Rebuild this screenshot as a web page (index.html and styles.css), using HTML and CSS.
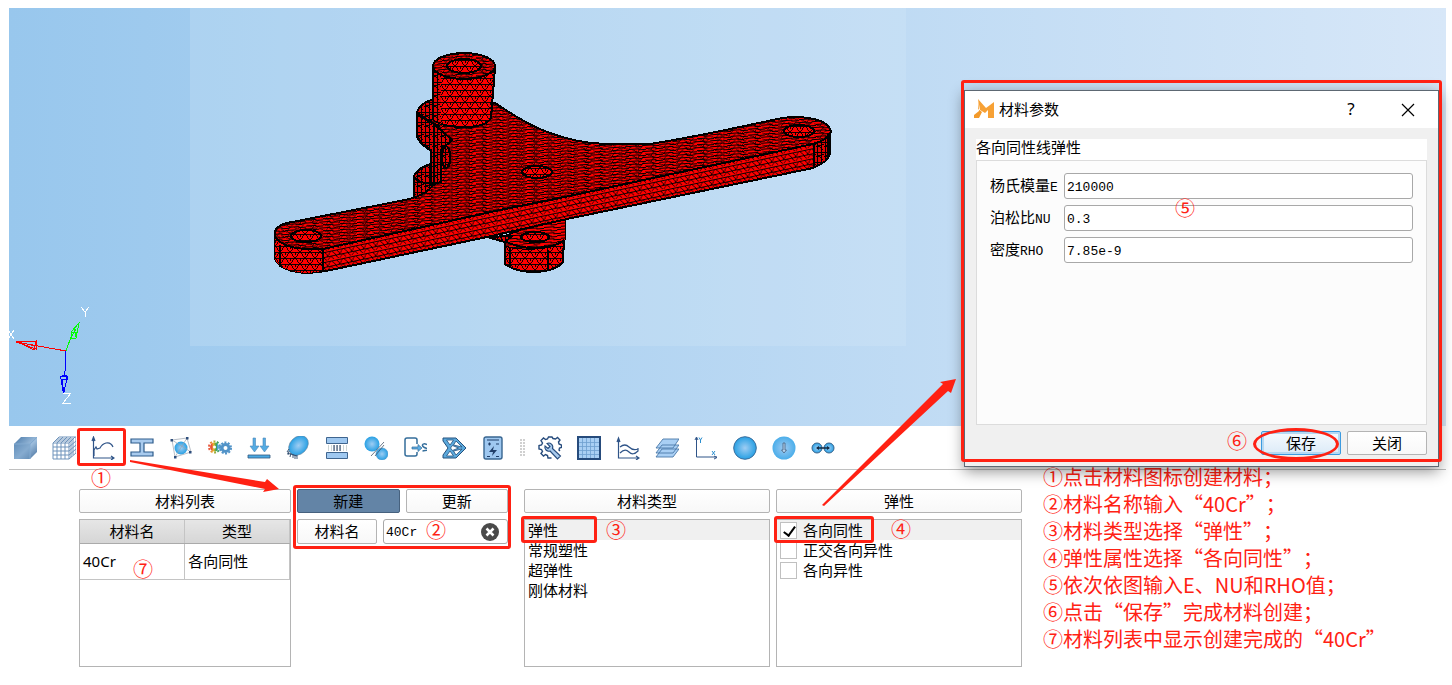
FILE: index.html
```html
<!DOCTYPE html>
<html lang="zh-CN">
<head>
<meta charset="utf-8">
<title>材料参数</title>
<link rel="stylesheet" href="styles.css">
</head>
<body>
<main class="app">
  <section class="viewer">
    <svg class="model" width="716" height="338" viewBox="190 8 716 338" shape-rendering="crispEdges" role="img" aria-label="网格模型">
      <defs>
        <pattern id="mesh-top" width="17" height="6" patternUnits="userSpaceOnUse" patternTransform="skewY(-4)">
          <rect width="17" height="6" fill="#f00"/>
          <path d="M0 1h7l3 1h7M0 4h4l3 1h6l4-1" stroke="#000" fill="none"/>
        </pattern>
        <pattern id="mesh-diag" width="13" height="6" patternUnits="userSpaceOnUse" patternTransform="skewY(-10)">
          <path d="M0 0l5 3M7 0l-3 3M8 3l5 3M4 3l-3 3" stroke="#000" stroke-width=".8" fill="none"/>
        </pattern>
        <pattern id="mesh-side" width="12" height="10" patternUnits="userSpaceOnUse" patternTransform="skewY(-12)">
          <rect width="12" height="10" fill="#f00"/>
          <path d="M0 1h12M0 6h12M0 1l4 5l3-5l5 5M0 6l3 5l4-5l4 5" stroke="#000" stroke-width=".9" fill="none"/>
        </pattern>
        <pattern id="mesh-round" width="10" height="12" patternUnits="userSpaceOnUse">
          <rect width="10" height="12" fill="#f00"/>
          <path d="M0 .5h10M0 6.500h10M0 0l5 6l5-6M0 12l5-6l5 6M5 0v3M0 6v3" stroke="#000" stroke-width=".9" fill="none"/>
        </pattern>
        <pattern id="mesh-dense" width="8" height="10" patternUnits="userSpaceOnUse">
          <rect width="8" height="10" fill="#e00000"/>
          <path d="M1 0v10M5 0v10M0 2h8M0 7l8-3M1 4l6 6" stroke="#000" fill="none"/>
        </pattern>
      </defs>
      <g stroke="#000" stroke-width="2">
        <path d="M505 236V264Q515 272 535 272Q556 271 563 262L565 216Z" fill="url(#mesh-round)"/>
        <path d="M505 236V246Q517 250 535 249Q556 248 565 240V214Z" fill="url(#mesh-top)" stroke-width="1"/>
        <path d="M505 241Q517 248 535 248Q556 247 564 240M510 248V268M548 250V271" fill="none"/>
        <path d="M487 237L505 242L512 236Z" fill="url(#mesh-dense)"/>
        <path d="M434 163Q418 167 414 176V197L440 193V163Z" fill="url(#mesh-dense)"/>
        <path d="M414 177Q421 185 434 183" fill="none"/>
        <path d="M434 99Q420 103 417 112V137Q420 144 430 150H446V99Z" fill="url(#mesh-dense)"/>
        <path d="M275 232V259Q281 272 308 273L326 271L487 237L567 219L813 168Q829 161 830 153V131Z" fill="url(#mesh-side)"/>
        <path d="M275 236V259Q281 272 308 273L323 271V247Z" fill="url(#mesh-round)" stroke="none"/>
        <path d="M814 144L830 134V154Q827 162 814 167Z" fill="url(#mesh-dense)" stroke-width="1"/>
        <path d="M275 237V231Q278 225 287 223L400 201Q425 197 434 184V150L418 133Q417 127 433 119L495 103C510 113 523 122 542 130C570 141 590 144 612 144H650C690 138 745 126 782 118Q797 116 808 118Q829 121 831 132Q828 140 813 144L667 175L560 198L500 210L323 249Q285 251 275 237Z" fill="url(#mesh-top)"/>
        <path d="M275 237V231Q278 225 287 223L400 201Q425 197 434 184V150L418 133Q417 127 433 119L495 103C510 113 523 122 542 130C570 141 590 144 612 144H650C690 138 745 126 782 118Q797 116 808 118Q829 121 831 132Q828 140 813 144L667 175L560 198L500 210L323 249Q285 251 275 237Z" fill="url(#mesh-diag)"/>
        <path d="M417 113V136Q422 146 431 150V185L441 182V150L452 140L434 124Q425 118 417 113Z" fill="url(#mesh-dense)"/>
        <path d="M418 114Q429 123 440 126M434 126V186M323 249V271M280 245V267M814 144V167M828 134V157" fill="none"/>
        <path d="M433 66V119Q441 127 464 127Q486 127 491 118L495 68Z" fill="url(#mesh-round)"/>
        <path d="M433 66V119L441 124V75Z" fill="url(#mesh-dense)" stroke="none"/>
        <ellipse cx="464" cy="66" rx="31" ry="13" fill="url(#mesh-top)"/>
        <ellipse cx="464" cy="66" rx="31" ry="13" fill="url(#mesh-diag)"/>
        <ellipse cx="464" cy="66" rx="17" ry="7" fill="url(#mesh-round)"/>
      </g>
      <g fill="url(#mesh-round)" stroke="#000" stroke-width="2">
        <ellipse cx="306" cy="236" rx="15" ry="6"/>
        <ellipse cx="537" cy="172" rx="15" ry="6"/>
        <ellipse cx="799" cy="131" rx="15" ry="6"/>
        <ellipse cx="535" cy="237" rx="14" ry="5"/>
        <ellipse cx="446" cy="157" rx="4" ry="11" fill="url(#mesh-dense)"/>
      </g>
      <path d="M449 147q5 10 0 21z"/>
    </svg>
    <svg class="axes" width="90" height="110" viewBox="9 300 90 110" fill="none" shape-rendering="crispEdges" aria-hidden="true">
      <path d="M66 350L16 341M16 341l20-1v8zM22 342l14 3M36 340l-2 9l-14-7" stroke="#f00"/>
      <path d="M66 350l5-14M79 322l-8 9v6h5zM71 331l6 0M74 327l2 9M71 336l5-8" stroke="#0f0"/>
      <path d="M65.500 350v14l-1 12M60.500 375h7l-4 18zM60.500 378h7v-3l-4 18M61.500 374h5v7M62.500 378l1 15" stroke="#00f"/>
      <path d="M81 306l4 5l4-5M85 311v5M8 329l6 9M14 329l-6 9M63 392h8l-8 10h8" stroke="#fff"/>
    </svg>
  </section>

  <nav class="toolbar" aria-label="工具栏">
    <svg class="defs" width="0" height="0" aria-hidden="true">
      <defs>
        <linearGradient id="cube" x1="0" y1="0" x2="1" y2="1"><stop offset="0" stop-color="#4878a8"/><stop offset=".55" stop-color="#9dbddc"/><stop offset="1" stop-color="#456f9c"/></linearGradient>
        <radialGradient id="ball"><stop offset="0" stop-color="#9fcdf3"/><stop offset="1" stop-color="#27a0e4"/></radialGradient>
        <radialGradient id="soft"><stop offset="0" stop-color="#9fcaf2"/><stop offset="1" stop-color="#4baeea"/></radialGradient>
        <linearGradient id="gears"><stop offset="0" stop-color="#e8503c"/><stop offset=".35" stop-color="#e8b52c"/><stop offset=".8" stop-color="#35a24c"/><stop offset="1" stop-color="#4c9fd6"/></linearGradient>
      </defs>
    </svg>
    <button class="tool" aria-label="几何"><svg viewBox="0 0 24 24"><path d="M1 8l7-7h16v15l-7 7H1z" fill="url(#cube)"/><path d="M1 8h16v15H1z" fill="#6b96c0" opacity=".45"/><path d="M1 8h16l7-7M17 8v15" stroke="#83aad0" fill="none"/></svg></button>
    <button class="tool" aria-label="网格"><svg viewBox="0 0 24 24" fill="none" stroke="#6e93bb"><path d="M1 7h16v16H1zM5 7v16M9 7v16M13 7v16M1 11h16M1 15h16M1 19h16M1 7l6-6h17v16l-7 6M5 7l6-6M9 7l6-6M13 7l6-6M17 7l6-6M3 5h16v16M5 3h16v16M17 11l7-6M17 15l7-6M17 19l7-6"/></svg></button>
    <span class="tool-slot">
      <button class="tool" aria-label="材料"><svg viewBox="0 0 24 24" fill="none" stroke="#2f5488" stroke-width="1.200"><path d="M2.500 2v20H23M1 5l1.500-4L4 5M20 20l3 2-3 2M3 20V14l2-3 1 2 3-1q2-4 6-5 5-1 7 4"/></svg></button>
      <span class="frame frame-tool"></span><span class="mark mark-1">①</span>
    </span>
    <button class="tool" aria-label="截面"><svg viewBox="0 0 24 24"><path d="M1 3h22v4h-9v9h9v4H1v-4h9V7H1z" fill="#a9cbee" stroke="#2f5d8b" stroke-width="1.200"/></svg></button>
    <button class="tool" aria-label="节点"><svg viewBox="0 0 24 24"><circle cx="12" cy="12" r="6.500" fill="url(#ball)"/><path d="M3 4l15-2 4 14-16 5zM3 4l19 12M18 2L6 21" stroke="#9aa2ae" stroke-width=".7" fill="none"/><path d="M1.500 3h2.500v2.500H1.500zM17 1h2.500v2.500H17zM20 15h2.500v2.500H20zM5 20h2.500v2.500H5z" fill="#2e4e7c"/></svg></button>
    <button class="tool" aria-label="装配"><svg viewBox="0 0 24 24" fill="none" stroke="url(#gears)"><circle cx="6.500" cy="11" r="3" stroke-width="3"/><circle cx="6.500" cy="11" r="5.500" stroke-width="2" stroke-dasharray="2 1.450"/><g stroke="#5193c8"><circle cx="17.500" cy="12" r="3.500" stroke-width="3"/><circle cx="17.500" cy="12" r="5.500" stroke-width="2" stroke-dasharray="2 1.450"/></g></svg></button>
    <button class="tool" aria-label="载荷"><svg viewBox="0 0 24 24"><path d="M6 2h2.500v8H12l-4.500 6L3 10h3zM16 2h2.500v8H22l-4.500 6L13 10h3z" fill="#55ace3" stroke="#4b87b8" stroke-width=".6"/><path d="M1 19h22v3H1z" fill="#4aa8e2" stroke="#33597f" stroke-width=".8"/></svg></button>
    <button class="tool" aria-label="约束"><svg viewBox="0 0 24 24"><ellipse cx="12.500" cy="9.500" rx="11" ry="8.500" transform="rotate(-45 12.500 9.500)" fill="url(#ball)" stroke="#66809a" stroke-width=".6"/><path d="M3 13l-2 3M3 15l-1 4M5 17l-1 4M7 18v4M9 19v4M11 19v4M1 17l10 3" stroke="#27456a" stroke-width=".9" fill="none"/></svg></button>
    <button class="tool" aria-label="接触"><svg viewBox="0 0 24 24"><path d="M1.500 1.500h21v6h-21zM1.500 16.500h21v6h-21z" fill="#9fc8f0" stroke="#3f658f"/><path d="M3 10h19M3 12h19M3 14h19" stroke="#9aa" stroke-dasharray="1 2"/><path d="M8 10h8M8 12h8M8 14h8" stroke="#1d355c" stroke-dasharray="2 1"/></svg></button>
    <button class="tool" aria-label="连接"><svg viewBox="0 0 24 24"><circle cx="8" cy="8" r="7.500" fill="url(#ball)"/><circle cx="18" cy="18" r="6" fill="url(#ball)" stroke="#4b93c8" stroke-width=".6"/><path d="M20 6L7 20M20 9l-9 11" stroke="#44546a" stroke-width=".8"/></svg></button>
    <button class="tool" aria-label="输出"><svg viewBox="0 0 24 24"><path d="M14 8V4q0-2-2-2H4Q2 2 2 4v14q0 2 2 2h8q2 0 2-2v-2" fill="none" stroke="#356e9b" stroke-width="1.500"/><path d="M9 11h6V8.500l4 3.500-4 3.500V13H9z" fill="#5faee4" stroke="#356e9b" stroke-width=".7"/><path d="M24 8.500q-4-1.500-4.500.5T24 12.500 19.500 15" fill="none" stroke="#356e9b" stroke-width="1.500"/></svg></button>
    <button class="tool" aria-label="优化"><svg viewBox="0 0 24 24"><path d="M1 2h13l10 10-10 10H1v-3l5-7-5-7z" fill="#5ba9dc" stroke="#25517d"/><path d="M4.500 4h7l-3.500 5zM14 5l6 6-8.500-2zM4.500 20h7l-3.500-5zM14 19l6-6-8.500 2zM8.500 12l2-2.500 6 2.500-6 2.500z" fill="#fff" stroke="#25517d" stroke-width=".8"/></svg></button>
    <button class="tool" aria-label="求解"><svg viewBox="0 0 24 24"><rect x="3" y="1" width="18" height="22" rx="2" fill="#9fc8f0" stroke="#386590" stroke-width="1.400"/><path d="M6 4h12M7 8h3M8.500 6.500v3M15 8h3M6 20.500h3M15 20.500h3" stroke="#213f69" stroke-width="1.200"/><path d="M13 10l-5 6h4l-1 4 5-6h-4z" fill="#213f69"/></svg></button>
    <span class="grip"></span>
    <button class="tool" aria-label="设置"><svg viewBox="0 0 24 24" fill="none" stroke="#264b7c" stroke-width="1.400"><path d="M22 15l-1-1 .5-2 2-.5V9l-2.500-1-.5-2 1.500-2-2.500-2.500-2 1.500-2.500-.5L14 1h-3.500l-1 2-2 .5-2-1.500L3 4.500 4.500 7l-1 2L1 9.500V13l2.500.5 1 2L3 17.500 5.500 20l2-1.500 2 1L10 22h3.500"/><path d="M9 7.500a4 4 0 0 1 5.500 5l8 7.500-3 3-7.500-8a4 4 0 0 1-5-5l3 2.500 2-2z" fill="#a9cbee" stroke-width="1.100"/></svg></button>
    <button class="tool" aria-label="表格"><svg viewBox="0 0 24 24"><path d="M1 1h22v22H1z" fill="#a9cff4" stroke="#264b7c" stroke-width="2"/><path d="M5.500 2v20M9.500 2v20M13.500 2v20M17.500 2v20M2 6.500h20M2 10.500h20M2 14.500h20M2 18.500h20" stroke="#6f9fcf" stroke-width=".8"/></svg></button>
    <button class="tool" aria-label="曲线"><svg viewBox="0 0 24 24" fill="none" stroke="#2f5488" stroke-width="1.200"><path d="M2.500 3v19H23M1 6l1.500-4L4 6M20 20l3 2-3 2M4 11q5-4 9 0t9 2M4 17q5-5 9-1t9-1v-3"/></svg></button>
    <button class="tool" aria-label="铺层"><svg viewBox="0 0 24 24" fill="#a9cff4" stroke="#4a78a8" stroke-width=".9"><path d="M1 21l6-8h17l-6 8zM1 17l6-8h17l-6 8zM1 12l7-9h16l-6 9z"/></svg></button>
    <button class="tool" aria-label="坐标系"><svg viewBox="0 0 24 24" fill="none" stroke="#2f5488"><path d="M2.500 2v19H23M1 4l1.500-3L4 4M20 20l3 1.500-3 1.500"/><path d="M5 1.500L6.500 4 8 1.500M6.500 4v3M18 15l3 4M21 15l-3 4" stroke="#2b8fd0"/></svg></button>
    <button class="tool" aria-label="球体"><svg viewBox="0 0 24 24"><circle cx="12" cy="12" r="11.300" fill="url(#ball)" stroke="#3c6e9c"/></svg></button>
    <button class="tool" aria-label="质量点"><svg viewBox="0 0 24 24"><circle cx="12" cy="12" r="11.500" fill="url(#soft)"/><path d="M11 7h2v7h1.500L12 17l-2.500-3H11z" fill="#b5d3ef" stroke="#44607e" stroke-width=".8"/></svg></button>
    <button class="tool" aria-label="耦合"><svg viewBox="0 0 24 24"><circle cx="6" cy="12" r="5" fill="url(#ball)" stroke="#3a648c"/><circle cx="18" cy="12" r="5" fill="url(#ball)" stroke="#3a648c"/><path d="M6 12h12" stroke="#142b45" stroke-width="1.500"/><path d="M5 12l3-2v4zM19 12l-3-2v4z" fill="#142b45"/></svg></button>
  </nav>

  <section class="panels">
    <div class="panel">
      <button class="btn">材料列表</button>
      <div class="box">
        <table class="materials">
          <thead><tr><th>材料名</th><th>类型</th></tr></thead>
          <tbody><tr><td>40Cr</td><td>各向同性</td></tr></tbody>
        </table>
      </div>
      <span class="mark mark-7">⑦</span>
    </div>
    <div class="panel panel-edit">
      <div class="pair">
        <button class="btn btn-active">新建</button>
        <button class="btn">更新</button>
      </div>
      <div class="pair pair-name">
        <label class="btn name-label" for="mat-name">材料名</label>
        <div class="name-field">
          <input id="mat-name" class="field" type="text" value="40Cr">
          <button class="clear" aria-label="清除"><svg viewBox="0 0 18 18"><circle cx="9" cy="9" r="9" fill="#4a4a4a"/><path d="M5.500 5.500l7 7M12.500 5.500l-7 7" stroke="#fff" stroke-width="2.500"/></svg></button>
        </div>
      </div>
      <span class="frame frame-edit"></span><span class="mark mark-2">②</span>
    </div>
    <div class="panel">
      <button class="btn">材料类型</button>
      <ul class="box list">
        <li class="row selected">弹性</li>
        <li class="row">常规塑性</li>
        <li class="row">超弹性</li>
        <li class="row">刚体材料</li>
      </ul>
      <span class="frame frame-type"></span><span class="mark mark-3">③</span>
    </div>
    <div class="panel">
      <button class="btn">弹性</button>
      <div class="box list">
        <label class="row check selected"><input type="checkbox" checked>各向同性</label>
        <label class="row check"><input type="checkbox">正交各向异性</label>
        <label class="row check"><input type="checkbox">各向异性</label>
      </div>
      <span class="frame frame-elastic"></span><span class="mark mark-4">④</span>
    </div>
    <div class="steps">
      <p>①点击材料图标创建材料；</p>
      <p>②材料名称输入“40Cr”；</p>
      <p>③材料类型选择“弹性”；</p>
      <p>④弹性属性选择“各向同性”；</p>
      <p>⑤依次依图输入E、NU和RHO值；</p>
      <p>⑥点击“保存”完成材料创建；</p>
      <p>⑦材料列表中显示创建完成的“40Cr”</p>
    </div>
  </section>

  <form class="dialog" role="dialog" aria-labelledby="dlg-title">
    <header class="titlebar">
      <svg class="logo" viewBox="0 0 20 20" aria-hidden="true"><path d="M4 0l8 9 8-6v16h-6v-8l-3 3-5-3z" fill="#f7a135"/><path d="M4 0v10l4 3-3 6H0v-3l5-4z" fill="#f39a2b"/></svg>
      <h1 id="dlg-title">材料参数</h1>
      <button type="button" class="win help">?</button>
      <button type="button" class="win" aria-label="关闭窗口"><svg viewBox="0 0 14 14"><path d="M1 1l12 12M13 1L1 13" stroke="#000" stroke-width="1.200"/></svg></button>
    </header>
    <div class="dialog-body">
      <h2 class="group-title">各向同性线弹性</h2>
      <div class="group">
        <label for="e">杨氏模量<span class="mono">E</span></label><input id="e" class="field" type="text" value="210000">
        <label for="nu">泊松比<span class="mono">NU</span></label><input id="nu" class="field" type="text" value="0.3">
        <label for="rho">密度<span class="mono">RHO</span></label><input id="rho" class="field" type="text" value="7.85e-9">
      </div>
      <footer class="actions">
        <button type="button" class="btn btn-default">保存</button>
        <button type="button" class="btn">关闭</button>
      </footer>
    </div>
    <span class="frame frame-dialog"></span>
    <span class="ring"></span>
    <span class="mark mark-5">⑤</span><span class="mark mark-6">⑥</span>
  </form>

  <svg class="arrows" width="960" height="520" viewBox="0 0 960 520" aria-hidden="true">
    <path d="M130 460L265 482L267 479L279 489L263 492L265 489L130 462ZM822 505L943 384L940 382L956 379L951 393L948 391L824 506Z" fill="#ff2113"/>
  </svg>
</main>
</body>
</html>
```
FILE: styles.css
```css
* { box-sizing: border-box; }

body {
  margin: 0;
  background: #fff;
  color: #000;
  font-family: "Noto Sans", "Noto Sans CJK SC", sans-serif;
  font-size: 15px;
  line-height: 20px;
}

h1, h2, p, ul { margin: 0; padding: 0; font-size: inherit; font-weight: 400; }
ul { list-style: none; }
button, input { font: inherit; color: inherit; }

.app {
  position: relative;
  display: flex;
  flex-direction: column;
  min-height: 100vh;
  padding: 8px 6px 18px 9px;
}

/* 3D view */
.viewer {
  position: relative;
  flex: 1;
  overflow: hidden;
  background: linear-gradient(90deg, #98c7ed, #d7e7f8);
}
.model { display: block; margin-left: 181px; background: rgba(225, 240, 250, 0.2); }
.axes { position: absolute; left: 0; bottom: 15px; }

/* Toolbar */
.toolbar {
  display: flex;
  align-items: center;
  gap: 15px;
  height: 44px;
  padding-left: 4px;
  border-bottom: 1px solid #c0c0c0;
}
.defs { position: absolute; }
.tool { width: 24px; height: 24px; padding: 0; border: 0; background: none; }
.tool svg { display: block; width: 24px; height: 24px; }
.tool-slot { position: relative; height: 24px; }
.grip {
  width: 5px;
  height: 17px;
  margin-right: -2px;
  background: radial-gradient(circle at 1px 1px, #d0d0d0 1px, transparent 1px) 0 0 / 3px 3px;
}

/* Panels */
.panels {
  display: grid;
  grid-template-columns: minmax(0, 212fr) minmax(0, 221fr) minmax(0, 246fr) minmax(0, 246fr) minmax(0, 418fr);
  gap: 6px;
  padding: 19px 0 0 70px;
}
.panel { position: relative; display: flex; flex-direction: column; gap: 6px; }
.panel-edit { padding-right: 10px; }
.pair { display: grid; grid-template-columns: 1fr 1fr; gap: 6px; }
.pair-name { grid-template-columns: 80px 1fr; }

.btn {
  height: 24px;
  padding: 0;
  border: 1px solid #b4b4b4;
  border-radius: 2px;
  background: linear-gradient(#fff, #f8f8f8);
  line-height: 22px;
  text-align: center;
}
.btn-active { border-color: #46617e; background: #6384a6; }

.box { height: 148px; border: 1px solid #b4b4b4; background: #fff; }
.materials { width: 100%; border-collapse: collapse; table-layout: fixed; }
.materials th, .materials td { padding: 0 3px; border: 1px solid #c4c4c4; border-top: 0; border-left: 0; }
.materials th { height: 23px; border-bottom-color: #aaa; background: linear-gradient(#e6e6e6, #d6d6d6); font-weight: 400; }
.materials td { height: 36px; }

.list { padding: 0; }
.row { display: block; height: 20px; padding-left: 3px; line-height: 20px; }
.check { display: flex; align-items: center; gap: 6px; }
.selected { background: #f0f0f0; }
.check input {
  position: relative;
  appearance: none;
  width: 17px;
  height: 17px;
  margin: 0;
  border: 1px solid #c0c0c0;
  background: #fff;
}
.check input:checked::after {
  content: "";
  position: absolute;
  left: 5px;
  top: 1px;
  width: 5px;
  height: 10px;
  border: solid #000;
  border-width: 0 2px 2px 0;
  transform: rotate(36deg);
}

.field {
  width: 100%;
  height: 26px;
  padding: 2px 2px 0;
  border: 1px solid #a8a8a8;
  border-radius: 3px;
  background: #fff;
  font-family: "Liberation Mono", monospace;
  font-size: 13px;
}
.mono { font-family: "Liberation Mono", monospace; font-size: 13px; }
.name-field { position: relative; }
.name-label, .name-field .field { height: 25px; }
.clear { position: absolute; right: 9px; top: 4px; width: 18px; height: 18px; padding: 0; border: 0; background: none; }
.clear svg { display: block; }

.steps {
  padding-left: 15px;
  margin: -26px 0 0;
  color: #ff2113;
  font-family: "Noto Sans CJK SC", sans-serif;
  font-size: 20px;
  line-height: 27px;
  text-spacing-trim: space-all;
  white-space: nowrap;
}

/* Dialog */
.dialog {
  position: absolute;
  top: 90px;
  right: 13px;
  width: 475px;
  border: 1px solid #5d6873;
  background: #f0f0f0;
  box-shadow: 0 4px 14px rgba(0, 0, 0, 0.45);
}
.titlebar { display: flex; align-items: center; height: 37px; padding: 0 14px 2px 9px; background: #fff; }
.logo { width: 20px; height: 20px; margin-right: 5px; }
.titlebar h1 { flex: 1; }
.win { width: 32px; height: 24px; padding: 0; border: 0; background: none; text-align: center; }
.win svg { width: 14px; height: 14px; vertical-align: middle; }
.help { margin-right: 25px; font-size: 17px; }
.dialog-body { padding: 11px; }
.group-title { height: 21px; background: #fff; line-height: 16px; }
.group {
  display: grid;
  grid-template-columns: 68px 1fr;
  grid-auto-rows: 26px;
  align-items: center;
  gap: 6px;
  height: 265px;
  padding: 12px 13px;
  border: 1px solid #dcdcdc;
  background: #fcfcfc;
}
.group label { white-space: nowrap; }
.actions { display: flex; justify-content: flex-end; gap: 6px; margin-top: 6px; }
.actions .btn { width: 80px; }
.btn-default {
  border-color: #3c9be0;
  background: linear-gradient(#f6fafe, #dcebf8);
  box-shadow: inset 0 0 0 2px #b5d9f3;
}

/* Annotations drawn over the interface */
.frame { position: absolute; border: 3px solid #ff2113; border-radius: 3px; pointer-events: none; }
.frame-tool { left: -14px; top: -8px; width: 49px; height: 38px; }
.frame-edit { left: -4px; top: -4px; right: 7px; height: 64px; }
.frame-type { left: -3px; top: 27px; width: 76px; height: 27px; }
.frame-elastic { left: -2px; top: 27px; width: 100px; height: 27px; }
.frame-dialog { left: -4px; top: -11px; right: -4px; bottom: 4px; }
.ring { position: absolute; right: 99px; bottom: 6px; width: 86px; height: 32px; border: 3px solid #ff2113; border-radius: 50%; pointer-events: none; }
.mark {
  position: absolute;
  color: #ff2113;
  font-family: "Noto Sans CJK SC", sans-serif;
  font-size: 20px;
  line-height: 20px;
  pointer-events: none;
}
.mark-1 { left: 0; top: 32px; }
.mark-2 { left: 129px; top: 31px; }
.mark-3 { left: 82px; top: 31px; }
.mark-4 { left: 115px; top: 30px; }
.mark-5 { left: 210px; top: 107px; }
.mark-6 { right: 191px; bottom: 15px; }
.mark-7 { left: 54px; top: 70px; }
.arrows { position: absolute; left: 0; top: 0; pointer-events: none; }
```
